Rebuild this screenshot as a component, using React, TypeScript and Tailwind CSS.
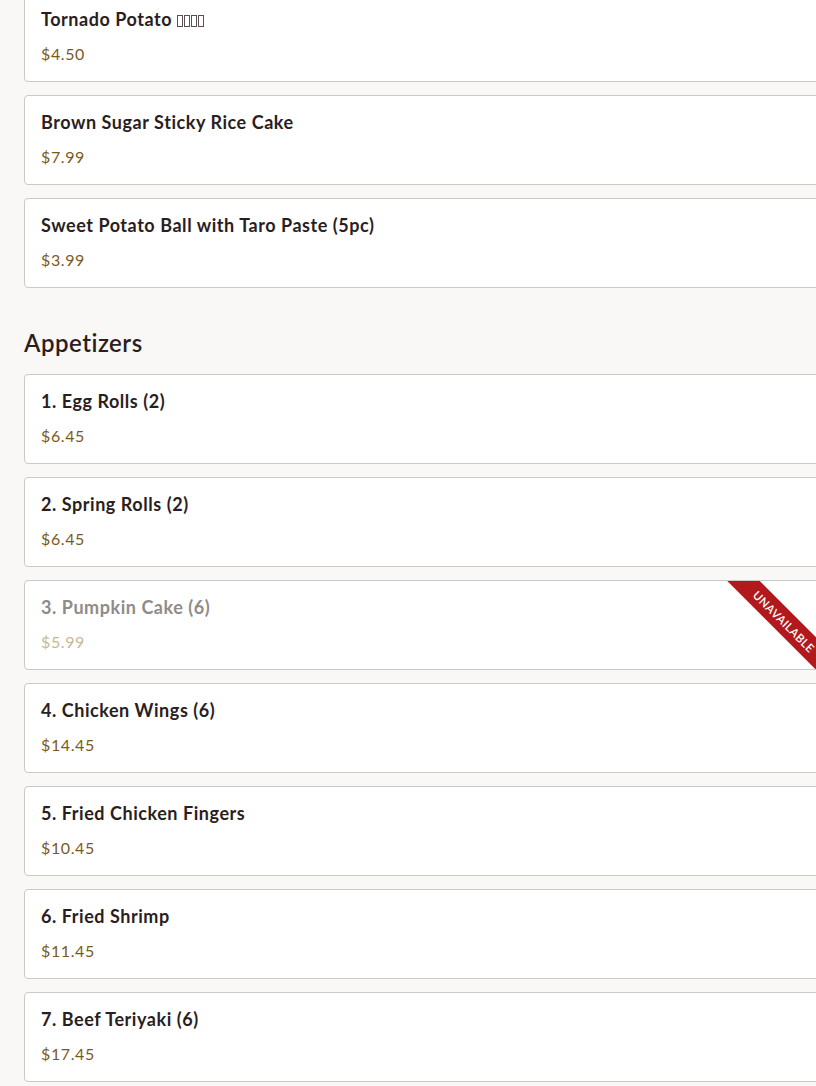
import React from "react";

type Item = { name: string; price: string; unavailable?: boolean; tofu?: boolean };

const top: Item[] = [
  { name: "Tornado Potato", price: "$4.50", tofu: true },
  { name: "Brown Sugar Sticky Rice Cake", price: "$7.99" },
  { name: "Sweet Potato Ball with Taro Paste (5pc)", price: "$3.99" },
];

const appetizers: Item[] = [
  { name: "1. Egg Rolls (2)", price: "$6.45" },
  { name: "2. Spring Rolls (2)", price: "$6.45" },
  { name: "3. Pumpkin Cake (6)", price: "$5.99", unavailable: true },
  { name: "4. Chicken Wings (6)", price: "$14.45" },
  { name: "5. Fried Chicken Fingers", price: "$10.45" },
  { name: "6. Fried Shrimp", price: "$11.45" },
  { name: "7. Beef Teriyaki (6)", price: "$17.45" },
];

function Tofu() {
  return (
    <span className="inline-flex items-end gap-[1px] ml-[5px] align-[-1px]">
      {[0, 1, 2, 3].map((i) => (
        <span key={i} className="inline-block w-[6px] h-[12px] border border-[#5a5050]" />
      ))}
    </span>
  );
}

function Card({ item }: { item: Item }) {
  return (
    <div className="relative overflow-hidden w-[802px] h-[90px] bg-white border border-[#cbc9c6] rounded-[4px] px-4 pt-[15px] flex flex-col gap-3">
      <div
        className={
          "h-[22px] text-[18px] leading-[22px] font-bold tracking-[0.55px] whitespace-nowrap " +
          (item.unavailable ? "text-[#8f8b89]" : "text-[#2a1e1e]")
        }
      >
        {item.name}
        {item.tofu && <Tofu />}
      </div>
      <div
        className={
          "text-[16px] leading-6 tracking-[0.6px] " +
          (item.unavailable ? "text-[#c9b796]" : "text-[#7b5a1e]")
        }
      >
        {item.price}
      </div>
      {item.unavailable && (
        <div className="absolute right-[-29px] top-[29px] w-[140px] h-[23px] rotate-45 bg-[#b2191c] flex items-center justify-center">
          <span className="text-white text-[11.5px] font-semibold uppercase tracking-[0.4px]">
            Unavailable
          </span>
        </div>
      )}
    </div>
  );
}

export default function App() {
  return (
    <div
      className="w-full h-[1086px] overflow-hidden bg-[#f9f8f6]"
      style={{ fontFamily: "Lato, 'Noto Sans', sans-serif" }}
    >
      <div className="pl-6 -mt-2 flex flex-col gap-[13px]">
        {top.map((it) => (
          <Card key={it.name} item={it} />
        ))}
      </div>
      <h2 className="pl-6 mt-[39px] mb-[15px] text-[24px] leading-8 font-semibold tracking-[0.5px] text-[#2a1e1e]">
        Appetizers
      </h2>
      <div className="pl-6 flex flex-col gap-[13px]">
        {appetizers.map((it) => (
          <Card key={it.name} item={it} />
        ))}
      </div>
    </div>
  );
}
